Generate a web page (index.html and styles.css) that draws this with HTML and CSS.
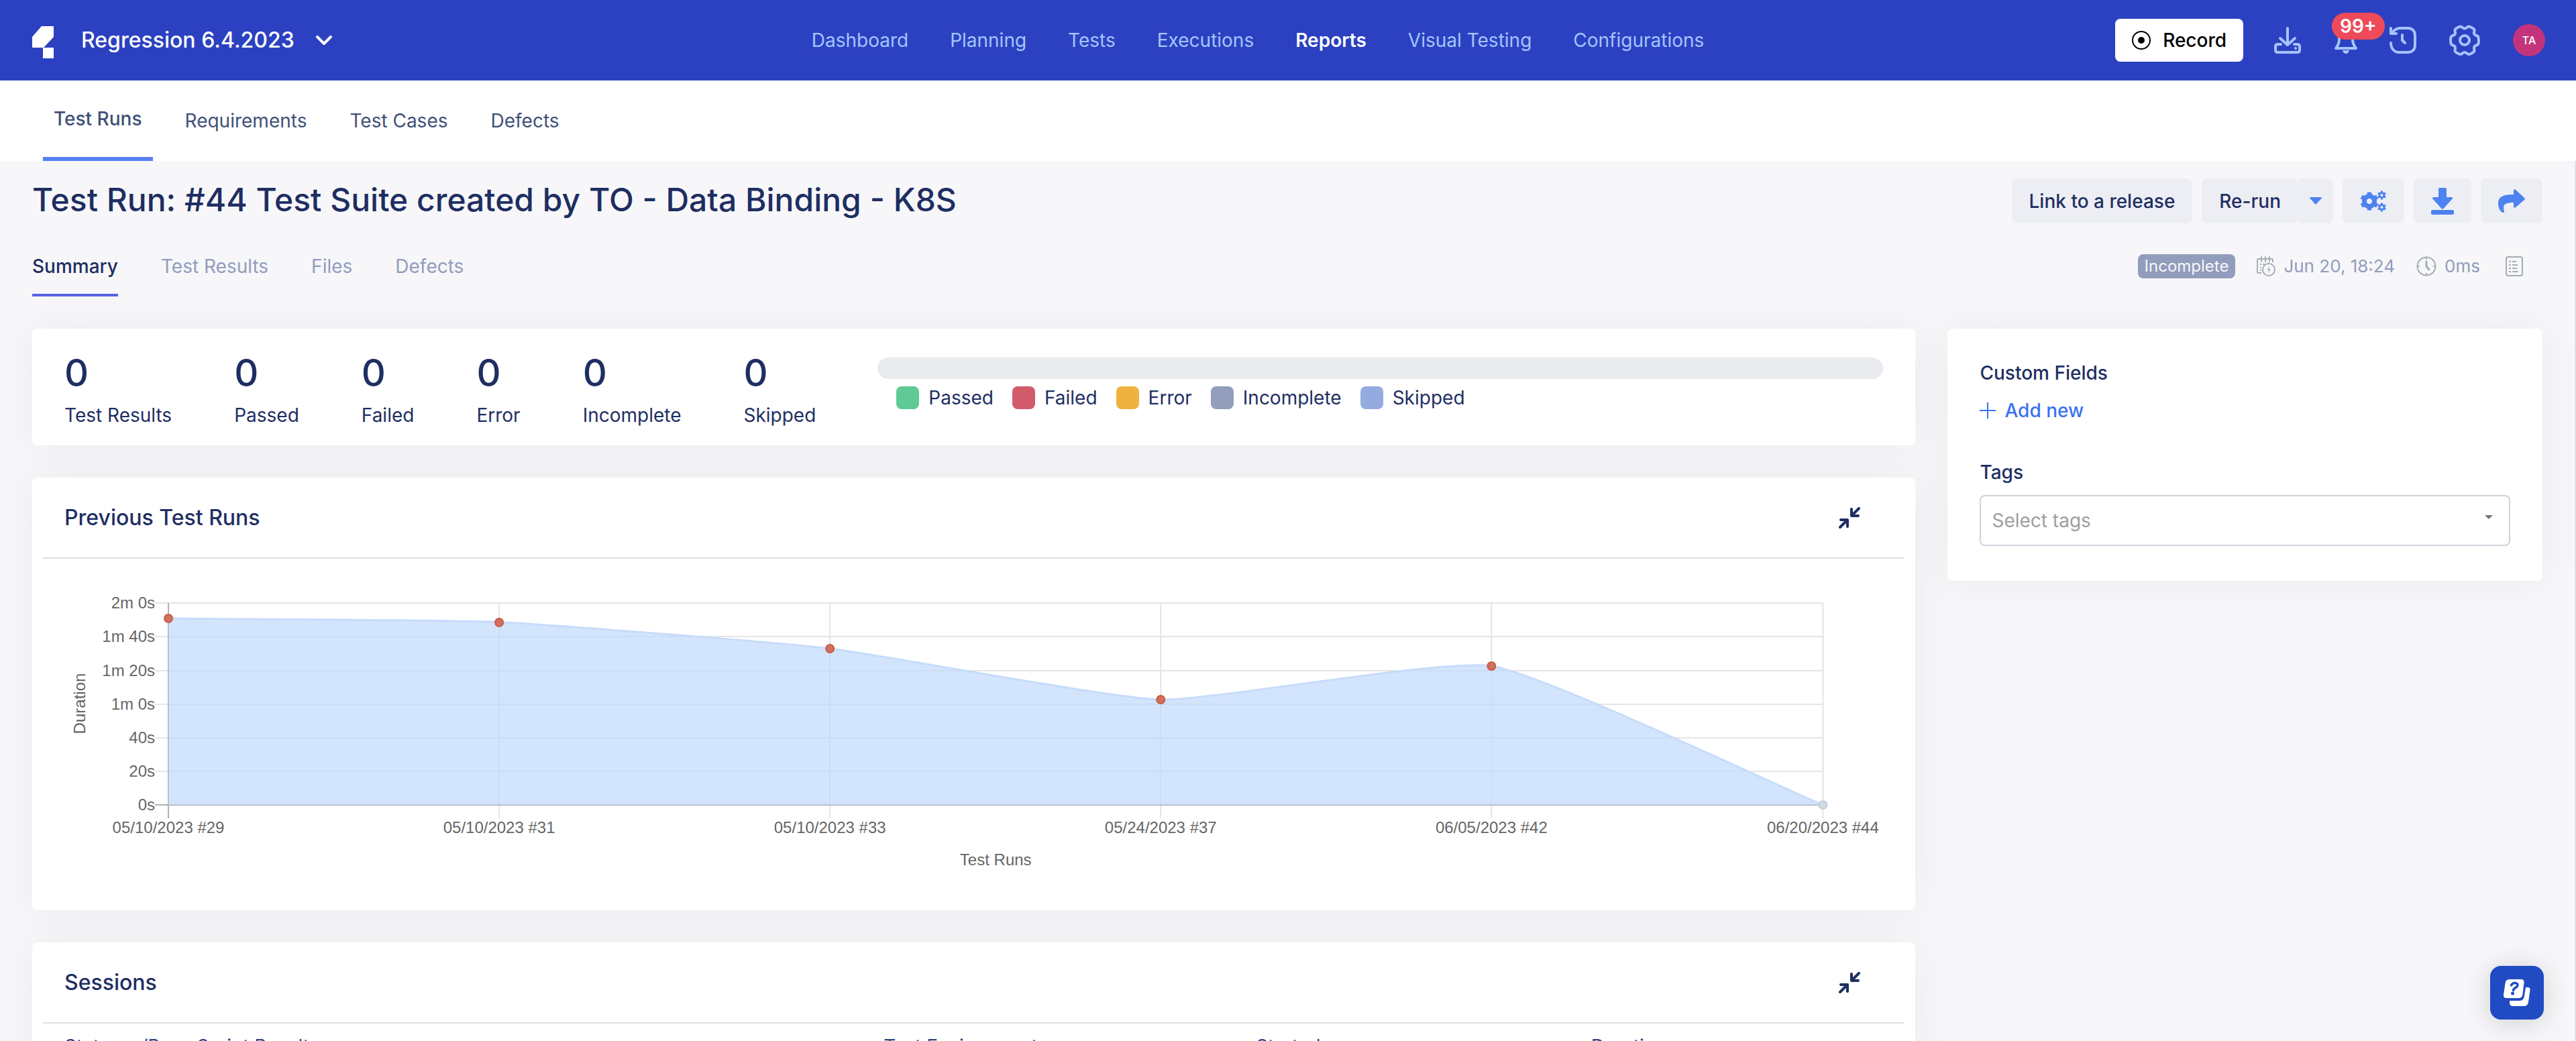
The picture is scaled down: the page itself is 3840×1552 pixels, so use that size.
FILE: index.html
```html
<!DOCTYPE html>
<html lang="en">
<head>
<meta charset="utf-8">
<title>Test Run #44</title>
<link rel="stylesheet" href="styles.css">
</head>
<body>
<header class="topbar">
  <div class="topbar-left">
    <svg class="logo" viewBox="0 0 32 48" width="32" height="48" aria-hidden="true"><path d="M14 0h18v16L17 32H0V16zM16 32h16v16H16z" fill="#fff"/></svg>
    <button class="project" type="button">Regression 6.4.2023
      <svg viewBox="0 0 26 16" width="26" height="16" aria-hidden="true"><path d="M3 3l10 10L23 3" fill="none" stroke="#fff" stroke-width="4" stroke-linecap="round" stroke-linejoin="round"/></svg>
    </button>
  </div>
  <nav class="main-nav" aria-label="Main">
    <a href="#">Dashboard</a>
    <a href="#">Planning</a>
    <a href="#">Tests</a>
    <a href="#">Executions</a>
    <a href="#" class="current">Reports</a>
    <a href="#">Visual Testing</a>
    <a href="#">Configurations</a>
  </nav>
  <div class="topbar-right">
    <button class="record" type="button">
      <svg viewBox="0 0 28 28" width="28" height="28" aria-hidden="true"><circle cx="14" cy="14" r="13" fill="none" stroke="#000" stroke-width="2"/><circle cx="14" cy="14" r="5" fill="#000"/></svg>
      Record
    </button>
    <button class="tool" type="button" aria-label="Download">
      <svg viewBox="0 0 40 40" width="40" height="40"><g fill="none" stroke="#a4c4fc" stroke-width="4" stroke-linecap="round" stroke-linejoin="round"><path d="M20 2v25M9 17l11 10 11-10"/><path d="M10 26H5.500q-3.500 0-3.500 3.500v5q0 3.500 3.500 3.500h29q3.500 0 3.500-3.500v-5q0-3.500-3.500-3.500H30"/></g><circle cx="32" cy="32" r="2" fill="#a4c4fc"/></svg>
    </button>
    <button class="tool bell" type="button" aria-label="Notifications">
      <svg viewBox="0 0 40 40" width="40" height="40"><path d="M21 2c-7 0-10 5-10 11v6c0 5-2 9-5 13h30c-3-4-5-8-5-13v-6c0-6-3-11-10-11z" fill="none" stroke="#a4c4fc" stroke-width="4" stroke-linejoin="round"/><path d="M16 35h10q-1 5-5 5t-5-5z" fill="#a4c4fc"/></svg>
      <span class="count">99+</span>
    </button>
    <button class="tool" type="button" aria-label="History">
      <svg viewBox="0 0 40 40" width="40" height="40"><g fill="none" stroke="#a4c4fc" stroke-width="4" stroke-linecap="round" stroke-linejoin="round"><path d="M3 10C7 4 11 2 16 2h11c7 0 11 4 11 11v14c0 7-4 11-11 11H14C7 38 2 32 2 24"/><path d="M2 2v8h8"/><path d="M19 12v8l4 4"/></g></svg>
    </button>
    <button class="tool gear" type="button" aria-label="Settings">
      <svg viewBox="0 0 46 46" width="46" height="46"><g fill="none" stroke="#a4c4fc" stroke-width="4" stroke-linejoin="round"><circle cx="23" cy="23" r="7"/><path d="M17 2.500c2 0 3 3 6 3s4-3 6-3 8 3 8.500 5-1.500 4 0 6.500 4.500 1.500 5.500 3.500 1.500 9.500 0 11.500-4 1-5.500 3.500.5 4.500 0 6.500-6.500 5-8.500 5-3-3-6-3-4 3-6 3-8-3-8.500-5 1.500-4 0-6.500-4.500-1.500-5.500-3.500-1.500-9.500 0-11.500 4-1 5.500-3.500-.5-4.500 0-6.500 6.500-5 8.500-5z"/></g></svg>
    </button>
    <button class="avatar" type="button">TA</button>
  </div>
</header>

<nav class="subnav" aria-label="Reports">
  <a href="#" class="current">Test Runs</a>
  <a href="#">Requirements</a>
  <a href="#">Test Cases</a>
  <a href="#">Defects</a>
</nav>

<main class="page">
  <div class="title-row">
    <h1>Test Run: #44 Test Suite created by TO - Data Binding - K8S</h1>
    <div class="actions">
      <button class="btn" type="button">Link to a release</button>
      <div class="split">
        <button class="btn" type="button">Re-run</button>
        <button class="btn caret" type="button" aria-label="Re-run options"><svg viewBox="0 0 18 11" width="18" height="11"><path d="M1 0h16q1.500 1 0 2.500L10 10q-1 1-2 0L1 2.500Q-.5 1 1 0z" fill="#4d82f0"/></svg></button>
      </div>
      <button class="btn icon-btn" type="button" aria-label="Configure">
        <svg viewBox="0 0 40 32" width="40" height="32" fill="none" stroke="#4d82f0"><circle cx="14" cy="16" r="7.500" stroke-width="7"/><path d="M14 2.500v5M14 24.500v5M2.300 9.250l4.300 2.500M21.400 20.250l4.300 2.500M2.300 22.750l4.300-2.500M21.400 11.750l4.300-2.500" stroke-width="6.500"/><circle cx="32.500" cy="7" r="3.500" stroke-width="3"/><path d="M32.500.5v2M32.500 11.500v2M26.900 3.750l1.700 1M36.400 9.250l1.700 1M26.900 10.250l1.700-1M36.400 4.750l1.700-1" stroke-width="3"/><circle cx="32.500" cy="25" r="3.500" stroke-width="3"/><path d="M32.500 18.500v2M32.500 29.500v2M26.900 21.750l1.700 1M36.400 27.250l1.700 1M26.900 28.250l1.700-1M36.400 22.750l1.700-1" stroke-width="3"/></svg>
      </button>
      <button class="btn icon-btn narrow" type="button" aria-label="Download report">
        <svg viewBox="0 0 34 40" width="34" height="40" fill="#4d82f0"><path d="M13 0h8q2 0 2 2v12h8q2 1 .5 2.500L18.500 31q-1.500 1-3 0L2.500 16.500Q1 15 3 14h8V2q0-2 2-2z"/><rect y="33" width="34" height="7" rx="2"/></svg>
      </button>
      <button class="btn icon-btn" type="button" aria-label="Share">
        <svg viewBox="0 0 40 36" width="40" height="36" fill="#4d82f0"><path d="M23 2q0-2.500 2.500-1.500L39 13q1.500 1.500 0 3L25.500 27.500Q23 28.500 23 26v-6C10 20 6 23 9 33q0 3-3 1.500C2 32 0 27 0 22 0 11 7 8 23 8z"/></svg>
      </button>
    </div>
  </div>

  <div class="tab-row">
    <nav class="tabs" aria-label="Test run">
      <a href="#" class="current">Summary</a>
      <a href="#">Test Results</a>
      <a href="#">Files</a>
      <a href="#">Defects</a>
    </nav>
    <div class="meta">
      <span class="status">Incomplete</span>
      <span class="meta-item">
        <svg viewBox="0 0 28 30" width="28" height="30" fill="none" stroke="#a3adb5" stroke-width="2"><path d="M24 9V6q0-2-2-2H3Q1 4 1 6v17q0 2 2 2h4"/><path d="M7 1v7M13 1v7M19 1v7" stroke-linecap="round"/><path d="M5 12h2M9 12h3M5 17h2M5 21h2"/><circle cx="18" cy="20" r="9"/><path d="M18.500 15l-3 5h2.500l-.5 5 3.500-6H18z" fill="#a3adb5" stroke="none"/></svg>
        Jun 20, 18:24
      </span>
      <span class="meta-item">
        <svg viewBox="0 0 30 30" width="30" height="30" fill="none" stroke="#a3adb5" stroke-width="2"><circle cx="15" cy="15" r="13.500"/><path d="M15 8v7l4 5" stroke-width="3" stroke-linecap="round"/><path d="M15 2v3M15 25v3M2 15h3M25 15h3"/></svg>
        0ms
      </span>
      <svg class="log" role="img" aria-label="Log" viewBox="0 0 28 30" width="28" height="30" fill="none" stroke="#a3adb5" stroke-width="2"><rect x="2" y="1" width="24" height="28" rx="3"/><path d="M6 8h3M11 8h6M6 13h3M11 13h8M6 18h3M11 18h7M6 23h3M11 23h9"/></svg>
    </div>
  </div>

  <div class="columns">
    <div class="main-col">
      <section class="card stats">
        <dl class="counts">
          <div><dd>0</dd><dt>Test Results</dt></div>
          <div><dd>0</dd><dt>Passed</dt></div>
          <div><dd>0</dd><dt>Failed</dt></div>
          <div><dd>0</dd><dt>Error</dt></div>
          <div><dd>0</dd><dt>Incomplete</dt></div>
          <div><dd>0</dd><dt>Skipped</dt></div>
        </dl>
        <div class="progress">
          <div class="bar"></div>
          <ul class="legend">
            <li><i class="passed"></i>Passed</li>
            <li><i class="failed"></i>Failed</li>
            <li><i class="error"></i>Error</li>
            <li><i class="incomplete"></i>Incomplete</li>
            <li><i class="skipped"></i>Skipped</li>
          </ul>
        </div>
      </section>

      <section class="card">
        <div class="card-head">
          <h2>Previous Test Runs</h2>
          <button class="collapse" type="button" aria-label="Collapse previous test runs"><svg viewBox="0 0 32 32" width="32" height="32" fill="none" stroke="#1e2e62" stroke-width="4" stroke-linecap="round" stroke-linejoin="round"><path d="M30 2L20 12M19 3v10h10M2 30l10-10M3 19h10v10"/></svg></button>
        </div>
        <svg class="chart" viewBox="48 833 2807 524" role="img" aria-label="Duration of previous test runs">
          <g stroke="#e5e5e5" stroke-width="2">
            <path d="M231 899H2717M231 949H2717M231 1000H2717M231 1050H2717M231 1100H2717M231 1150H2717"/>
            <path d="M744 899V1220M1237 899V1220M1730 899V1220M2223 899V1220M2717 899V1220"/>
          </g>
          <path d="M231 1200H2717M251 899V1220" stroke="#b0b0b0" stroke-width="2"/>
          <path d="M251 922C325 923 670 924 744 927.500C818 931 1163 958.300 1237 967C1311 975.700 1656 1041 1730 1043C1804 1045 2152 981.700 2223 993C2300 1005 2643 1169 2717 1200H251z" fill="#c0dafc" fill-opacity=".7"/>
          <path d="M251 922C325 923 670 924 744 927.500C818 931 1163 958.300 1237 967C1311 975.700 1656 1041 1730 1043C1804 1045 2152 981.700 2223 993C2300 1005 2643 1169 2717 1200" fill="none" stroke="#c6dcfb" stroke-width="3"/>
          <g fill="#cf7260" stroke="#cb5a42" stroke-width="2">
            <circle cx="251" cy="922" r="6"/><circle cx="744" cy="928" r="6"/><circle cx="1237" cy="967" r="6"/><circle cx="1730" cy="1043" r="6"/><circle cx="2223" cy="993" r="6"/>
          </g>
          <circle cx="2717" cy="1200" r="6" fill="#d0d9e4" stroke="#c5ced8" stroke-width="2"/>
          <g class="axis" text-anchor="end">
            <text x="231" y="907">2m 0s</text><text x="231" y="957">1m 40s</text><text x="231" y="1008">1m 20s</text><text x="231" y="1058">1m 0s</text><text x="231" y="1108">40s</text><text x="231" y="1158">20s</text><text x="231" y="1208">0s</text>
          </g>
          <g class="axis" text-anchor="middle">
            <text x="251" y="1242">05/10/2023 #29</text><text x="744" y="1242">05/10/2023 #31</text><text x="1237" y="1242">05/10/2023 #33</text><text x="1730" y="1242">05/24/2023 #37</text><text x="2223" y="1242">06/05/2023 #42</text><text x="2717" y="1242">06/20/2023 #44</text>
            <text x="1484" y="1290">Test Runs</text>
            <text transform="translate(127 1049) rotate(-90)">Duration</text>
          </g>
        </svg>
      </section>

      <section class="card">
        <div class="card-head">
          <h2>Sessions</h2>
          <button class="collapse" type="button" aria-label="Collapse sessions"><svg viewBox="0 0 32 32" width="32" height="32" fill="none" stroke="#1e2e62" stroke-width="4" stroke-linecap="round" stroke-linejoin="round"><path d="M30 2L20 12M19 3v10h10M2 30l10-10M3 19h10v10"/></svg></button>
        </div>
        <table class="sessions">
          <thead><tr><th scope="col" class="c-status">Status w/Base Script Results</th><th scope="col" class="c-env">Test Environment</th><th scope="col" class="c-start">Started</th><th scope="col">Duration</th></tr></thead>
        </table>
      </section>
    </div>

    <aside class="card side">
      <h3>Custom Fields</h3>
      <button class="add" type="button"><svg viewBox="0 0 24 24" width="24" height="24" aria-hidden="true"><path d="M12 0v24M0 12h24" stroke="#3b72f0" stroke-width="2"/></svg>Add new</button>
      <label for="tags">Tags</label>
      <div class="select-wrap">
        <select id="tags"><option>Select tags</option></select>
      </div>
    </aside>
  </div>
</main>

<button class="help" type="button" aria-label="Help">
  <svg viewBox="0 0 40 40" width="40" height="40"><path d="M9 0h17q5 0 4.500 5l-2 17q-.5 6-6 6H4q-4.500 0-4-5L2.500 6Q3 0 9 0z" fill="#fff"/><path d="M33 12h3q4 0 3.500 4l-2.500 18q-1 6-7 6H14q-5 0-5-5v-3h15q6 0 7-7z" fill="#fff"/><path d="M11.500 9c2-5 10-4.500 9.500 0-.5 3.500-6 3.500-6.500 7.500" fill="none" stroke="#204bc3" stroke-width="3.500" stroke-linecap="round"/><circle cx="13.500" cy="21" r="2.500" fill="#204bc3"/></svg>
</button>
</body>
</html>
```
FILE: styles.css
```css
* { box-sizing: border-box; margin: 0; padding: 0; }
body {
  height: 100vh;
  overflow: hidden;
  display: flex;
  flex-direction: column;
  background: #f7f7f9;
  color: #1e2e62;
  font: 400 28px/36px Inter, "Liberation Sans", sans-serif;
}
a { color: inherit; text-decoration: none; }
button { font: inherit; color: inherit; background: none; border: 0; white-space: nowrap; }
svg { display: block; flex: none; }
ul { list-style: none; }

.topbar {
  flex: none;
  display: flex;
  align-items: center;
  height: 120px;
  padding: 0 46px 0 48px;
  background: #2c41c1;
}
.topbar-left, .topbar-right { flex: 1 1 0; display: flex; align-items: center; }
.topbar-left { gap: 41px; }
.logo { margin-top: 6px; }
.project { display: flex; align-items: center; gap: 31px; color: #fff; font-size: 32px; font-weight: 500; }
.main-nav { display: flex; gap: 62px; margin-right: 92px; color: #a4c4fc; }
.main-nav .current { color: #fff; font-weight: 600; }
.topbar-right { justify-content: flex-end; gap: 46px; }
.record {
  display: flex;
  align-items: center;
  gap: 18px;
  height: 64px;
  padding: 0 25px;
  border-radius: 8px;
  background: #fff;
  color: #000;
  font-weight: 500;
}
.tool { position: relative; width: 40px; display: flex; justify-content: center; }
.tool.gear { width: 52px; }
.count {
  position: absolute;
  left: 0;
  top: -21px;
  height: 40px;
  padding: 0 12px;
  border-radius: 20px;
  background: #ee4a5a;
  color: #fff;
  font-weight: 600;
  line-height: 40px;
}
.avatar { width: 48px; height: 48px; border-radius: 50%; background: #c4347c; color: #fff; font-size: 16px; font-weight: 500; line-height: 48px; }

.subnav { flex: none; display: flex; gap: 32px; height: 120px; padding: 0 64px; background: #fff; color: #405078; }
.subnav a { display: flex; align-items: center; padding: 0 16px; }
.subnav .current { border-bottom: 6px solid #5580f2; font-weight: 500; }

.page { flex: 1 1 0; min-height: 0; padding: 26px 48px 0; border-right: 2px solid #dfe2ea; }
.title-row, .tab-row { display: flex; justify-content: space-between; }
.title-row { height: 67px; }
h1 { font-size: 48px; line-height: 64px; font-weight: 500; }
.actions { display: flex; gap: 14px; }
.btn { display: flex; align-items: center; justify-content: center; height: 67px; padding: 0 26px; border-radius: 8px; background: #edeef4; font-weight: 500; }
.split { display: flex; }
.split .caret { width: 52px; padding: 0; border-radius: 0 8px 8px 0; }
.icon-btn { width: 92px; padding: 0; }
.icon-btn.narrow { width: 86px; }

.tab-row { margin-top: 37px; align-items: flex-start; }
.tabs { display: flex; gap: 64px; color: #929cbd; }
.tabs a { height: 72px; padding-top: 9px; border-bottom: 4px solid transparent; }
.tabs .current { color: #1e2e62; border-color: #5763e3; font-weight: 500; }
.meta { display: flex; align-items: center; gap: 32px; height: 54px; padding-right: 28px; color: #929cbd; font-size: 26px; }
.meta-item { display: flex; align-items: center; gap: 12px; }
.status { padding: 0 10px; border-radius: 8px; background: #929cbd; color: #f7f7f9; font-size: 24px; }
.log { margin-left: 5px; }

.columns { display: grid; grid-template-columns: 76fr 24fr; gap: 48px; align-items: start; margin-top: 48px; }
.main-col { display: flex; flex-direction: column; gap: 48px; min-width: 0; }
.card { border-radius: 8px; background: #fff; box-shadow: 0 0 64px rgba(30, 40, 60, .05); }
.stats { display: flex; align-items: flex-start; height: 174px; padding: 0 48px; }
.counts { display: flex; gap: 93px; padding-top: 32px; }
.counts div { display: flex; flex-direction: column; gap: 11px; }
.counts dd { font-size: 56px; line-height: 68px; font-weight: 500; }
.progress { flex: 1; margin-left: 92px; padding-top: 43px; }
.bar { height: 32px; border-radius: 16px; background: #eaebef; }
.legend { display: flex; gap: 28px; margin-top: 10px; padding-left: 28px; }
.legend li { display: flex; align-items: center; gap: 14px; }
.legend i { width: 34px; height: 34px; border-radius: 8px; }
.passed { background: #5fca96; }
.failed { background: #d25b6b; }
.error { background: #f0b23e; }
.incomplete { background: #939dbc; }
.skipped { background: #93abde; }

.card-head { display: flex; align-items: center; justify-content: space-between; height: 121px; margin: 0 16px; padding: 0 66px 0 32px; border-bottom: 2px solid #dddfe5; }
h2 { font-size: 32px; line-height: 40px; font-weight: 500; }
.chart { width: 100%; height: auto; }
.axis { fill: #666; font: 24px "Liberation Sans", Arial, sans-serif; }
.sessions { width: calc(100% - 32px); margin: 0 16px; border-collapse: collapse; table-layout: fixed; }
.sessions th { padding: 16px 32px; text-align: left; font-weight: 400; color: #33457f; }
.c-status { width: 44%; }
.c-env { width: 20%; }
.c-start { width: 18%; }

.side { padding: 48px 48px 52px; }
.side h3, .side label { display: block; font-size: 28px; font-weight: 500; }
.add { display: flex; align-items: center; gap: 13px; margin: 20px 0 56px; color: #3b72f0; font-weight: 500; }
.select-wrap { position: relative; margin-top: 16px; }
.select-wrap::after { content: ""; position: absolute; right: 26px; top: 30px; border: 6px solid transparent; border-top-color: #757575; border-bottom: 0; }
.side select { appearance: none; width: 100%; height: 76px; padding: 0 16px; border: 2px solid #cdd3da; border-radius: 8px; background: #fff; color: #9e9e9e; font: inherit; }

.help { position: fixed; right: 48px; bottom: 32px; display: flex; align-items: center; justify-content: center; width: 80px; height: 80px; border-radius: 16px; background: #204bc3; box-shadow: 0 4px 40px rgba(0, 0, 0, .16); }
```
